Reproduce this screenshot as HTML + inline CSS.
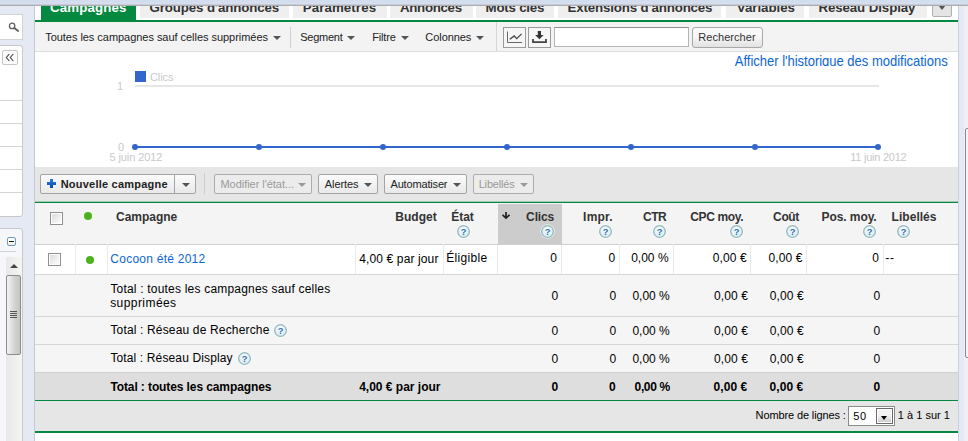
<!DOCTYPE html>
<html><head><meta charset="utf-8"><title>Campagnes</title>
<style>
html,body{margin:0;padding:0}
body{width:968px;height:441px;overflow:hidden;position:relative;background:#e4e9f4;font-family:"Liberation Sans",sans-serif;font-size:12px;color:#222}
.a{position:absolute}
.t{position:absolute;white-space:nowrap;line-height:14px}
.tab{position:absolute;top:5px;height:13px;background:#efefef;overflow:hidden}
.tab span{position:absolute;left:0;right:0;text-align:center;top:-6px;font-weight:bold;font-size:13.3px;line-height:16px;white-space:nowrap;color:#333}
.tb{font-size:11px;color:#222}
.arr{position:absolute;width:0;height:0;border-left:4px solid transparent;border-right:4px solid transparent;border-top:4px solid #555}
.btn{position:absolute;box-sizing:border-box;border:1px solid #a4a4a4;border-radius:2px;background:linear-gradient(#fbfbfb,#e9e9e9)}
.hd{font-weight:bold;font-size:12px;color:#333}
.q{position:absolute;width:13px;height:13px;border-radius:50%;box-sizing:border-box;border:1.5px solid #a3c4d2;background:#e6f1f6;color:#3f7fb8;font-size:10px;font-weight:bold;line-height:10px;text-align:center;box-shadow:0 0 1px #b9d0da}
.vl{position:absolute;width:1px;background:#eaeaea}
.hl{position:absolute;height:1px;background:#d6d6d6;left:35px;width:923px}
.r{position:absolute;white-space:nowrap;line-height:14px;text-align:right;width:100px}
.cb{position:absolute;width:13px;height:13px;box-sizing:border-box;border:1px solid #8e8f8f;background:#fff}
.cb i{position:absolute;left:1px;top:1px;right:1px;bottom:1px;background:linear-gradient(135deg,#dcdcdc,#fdfdfd)}
.dot{position:absolute;width:8px;height:8px;border-radius:50%;background:#4bb31e}
</style></head><body>
<div class="a" style="left:35px;top:0;width:923px;height:441px;background:#fff"></div>
<div class="a" style="left:34px;top:0;width:1px;height:441px;background:#c6c8cf"></div>
<div class="tab" style="left:41px;width:95px;background:#05883f;height:16px;"></div>
<div class="t" style="left:50.1px;top:1px;font-size:13.3px;font-weight:bold;color:#fff;letter-spacing:0.113px;">Campagnes</div>
<div class="tab" style="left:140px;width:149px;"></div>
<div class="t" style="left:149.5px;top:1px;font-size:13.3px;font-weight:bold;color:#333;letter-spacing:-0.118px;">Groupes d'annonces</div>
<div class="tab" style="left:293px;width:94px;"></div>
<div class="t" style="left:302.7px;top:1px;font-size:13.3px;font-weight:bold;color:#333;letter-spacing:0.1px;">Paramètres</div>
<div class="tab" style="left:390px;width:82.5px;"></div>
<div class="t" style="left:400.0px;top:1px;font-size:13.3px;font-weight:bold;color:#333;letter-spacing:-0.314px;">Annonces</div>
<div class="tab" style="left:475.6px;width:78.10000000000002px;"></div>
<div class="t" style="left:485.6px;top:1px;font-size:13.3px;font-weight:bold;color:#333;letter-spacing:-0.225px;">Mots clés</div>
<div class="tab" style="left:557.8px;width:163.70000000000005px;"></div>
<div class="t" style="left:567.6px;top:1px;font-size:13.3px;font-weight:bold;color:#333;letter-spacing:-0.155px;">Extensions d'annonces</div>
<div class="tab" style="left:726px;width:78px;"></div>
<div class="t" style="left:736.8px;top:1px;font-size:13.3px;font-weight:bold;color:#333;letter-spacing:-0.025px;">Variables</div>
<div class="tab" style="left:809px;width:117.5px;"></div>
<div class="t" style="left:818.4px;top:1px;font-size:13.3px;font-weight:bold;color:#333;letter-spacing:-0.092px;">Réseau Display</div>
<div class="btn" style="left:932px;top:-3px;width:20px;height:20px;background:#e4e4e4;border-color:#b0b0b0"></div>
<div class="a" style="left:938px;top:5px;width:0;height:0;border-left:4.5px solid transparent;border-right:4.5px solid transparent;border-top:5px solid #555"></div>
<div class="a" style="left:35px;top:20px;width:923px;height:2px;background:#05883f"></div>
<div class="a" style="left:35px;top:22px;width:923px;height:29px;background:#f3f3f3;border-bottom:1px solid #dcdcdc"></div>
<div class="t" style="left:45.2px;top:30px;font-size:11px;color:#222;letter-spacing:-0.038px;">Toutes les campagnes sauf celles supprimées</div>
<div class="arr" style="left:273px;top:36px"></div>
<div class="a" style="left:290px;top:27px;width:1px;height:21px;background:#d0d0d0"></div>
<div class="t" style="left:300.3px;top:30px;font-size:11px;color:#222;letter-spacing:-0.267px;">Segment</div>
<div class="arr" style="left:347px;top:36px"></div>
<div class="t" style="left:372.2px;top:30px;font-size:11px;color:#222;letter-spacing:-0.14px;">Filtre</div>
<div class="arr" style="left:400.5px;top:36px"></div>
<div class="t" style="left:425.3px;top:30px;font-size:11px;color:#222;letter-spacing:-0.057px;">Colonnes</div>
<div class="arr" style="left:476px;top:36px"></div>
<div class="a" style="left:496px;top:22px;width:1px;height:29px;background:#d6d6d6"></div>
<div class="a" style="left:503px;top:27px;width:23px;height:21px;box-sizing:border-box;border:1px solid #9a9a9a;background:#f6f6f6"><svg width="21" height="19" viewBox="0 0 21 19" style="position:absolute;left:0;top:0"><path d="M3.5 3.500V14.500H18" fill="none" stroke="#666" stroke-width="1"/><path d="M5.800 11.200L10.200 7.900L12.700 10.600L17.600 5.900" fill="none" stroke="#444" stroke-width="1.300"/></svg></div>
<div class="a" style="left:528px;top:27px;width:23px;height:21px;box-sizing:border-box;border:1px solid #9a9a9a;background:#f6f6f6"><svg width="21" height="19" viewBox="0 0 21 19" style="position:absolute;left:0;top:0"><path d="M8.8 3 H12 V7 H14.6 L10.4 11.2 L6.2 7 H8.8 Z" fill="#333"/><path d="M4 11 V14.2 H17 V11" fill="none" stroke="#444" stroke-width="1.8"/></svg></div>
<div class="a" style="left:554px;top:27px;width:135px;height:20px;box-sizing:border-box;border:1px solid #b5b5b5;border-top-color:#8f8f8f;background:#fff"></div>
<div class="btn" style="left:692px;top:27px;width:71px;height:21px;border-radius:3px;border-color:#a8a8a8;background:linear-gradient(#f8f8f8 40%,#e2e2e2)"></div>
<div class="t" style="left:698.3px;top:30px;font-size:11px;color:#333;letter-spacing:0.044px;">Rechercher</div>
<div class="a" style="left:700px;top:52px;width:258px;height:14px;overflow:hidden"><div class="t" style="left:34.8px;top:1px;font-size:13px;line-height:15px;color:#0c66d6;transform:scaleY(1.09);transform-origin:0 0;letter-spacing:-0.01px">Afficher l'historique des modifications</div></div>
<div class="a" style="left:135px;top:71px;width:11px;height:11px;background:#3366cc"></div>
<div class="t" style="left:150.0px;top:70px;font-size:11px;color:#c9c9c9;letter-spacing:-0.1px;">Clics</div>
<div class="a" style="left:135px;top:85px;width:744px;height:2px;background:#e6e6e6"></div>
<div class="t" style="left:117.1px;top:79px;font-size:11px;color:#c9c9c9;">1</div>
<div class="t" style="left:118.1px;top:140px;font-size:11px;color:#c9c9c9;">0</div>
<div class="t" style="left:109.4px;top:150px;font-size:11px;color:#c9c9c9;letter-spacing:-0.08px;">5 juin 2012</div>
<div class="t" style="left:850.2px;top:150px;font-size:11px;color:#c9c9c9;letter-spacing:-0.236px;">11 juin 2012</div>
<div class="a" style="left:135px;top:146px;width:743px;height:2px;background:#3366cc"></div>
<div class="a" style="left:132.0px;top:144px;width:6px;height:6px;border-radius:50%;background:#3366cc"></div>
<div class="a" style="left:255.9px;top:144px;width:6px;height:6px;border-radius:50%;background:#3366cc"></div>
<div class="a" style="left:379.8px;top:144px;width:6px;height:6px;border-radius:50%;background:#3366cc"></div>
<div class="a" style="left:503.7px;top:144px;width:6px;height:6px;border-radius:50%;background:#3366cc"></div>
<div class="a" style="left:627.6px;top:144px;width:6px;height:6px;border-radius:50%;background:#3366cc"></div>
<div class="a" style="left:751.5px;top:144px;width:6px;height:6px;border-radius:50%;background:#3366cc"></div>
<div class="a" style="left:875.4px;top:144px;width:6px;height:6px;border-radius:50%;background:#3366cc"></div>
<div class="a" style="left:35px;top:167px;width:923px;height:35px;background:#e6e6e6"></div>
<div class="a" style="left:35px;top:201px;width:923px;height:1px;background:rgba(5,136,63,.3)"></div><div class="a" style="left:35px;top:202px;width:923px;height:1px;background:#05883f"></div><div class="a" style="left:35px;top:203px;width:923px;height:1px;background:rgba(5,136,63,.15)"></div>
<div class="btn" style="left:40px;top:174px;width:135px;height:20px;border-radius:2px 0 0 2px"></div>
<div class="btn" style="left:174px;top:174px;width:22px;height:20px;border-radius:0 2px 2px 0"></div>
<svg class="a" style="left:47px;top:179px" width="9" height="9" viewBox="0 0 9 9"><defs><linearGradient id="pg" x1="0" y1="0" x2="0" y2="1"><stop offset="0" stop-color="#2a7ae0"/><stop offset="1" stop-color="#0a49b0"/></linearGradient></defs><path d="M3 0h3v3h3v3H6v3H3V6H0V3h3z" fill="url(#pg)"/></svg>
<div class="t" style="left:60.7px;top:177px;font-size:11px;font-weight:bold;color:#222;letter-spacing:0.225px;">Nouvelle campagne</div>
<div class="arr" style="left:182px;top:182.500px"></div>
<div class="a" style="left:204px;top:173px;width:1px;height:21px;background:#cfcfcf"></div>
<div class="btn" style="left:214px;top:174px;width:97.5px;height:20px;background:#ececec;border-color:#adadad"></div>
<div class="t" style="left:220.5px;top:177px;font-size:11px;color:#9a9a9a;letter-spacing:-0.041px;">Modifier l'état...</div>
<div class="arr" style="left:298px;top:182.500px;border-top-color:#999"></div>
<div class="btn" style="left:317.5px;top:174px;width:60.0px;height:20px;"></div>
<div class="t" style="left:324.8px;top:177px;font-size:11px;color:#222;letter-spacing:-0.083px;">Alertes</div>
<div class="arr" style="left:363.500px;top:182.500px"></div>
<div class="btn" style="left:383.5px;top:174px;width:83.0px;height:20px;"></div>
<div class="t" style="left:390.5px;top:177px;font-size:11px;color:#222;letter-spacing:-0.17px;">Automatiser</div>
<div class="arr" style="left:452.500px;top:182.500px"></div>
<div class="btn" style="left:472.5px;top:174px;width:61.0px;height:20px;background:#ececec;border-color:#adadad"></div>
<div class="t" style="left:478.7px;top:177px;font-size:11px;color:#9a9a9a;letter-spacing:-0.186px;">Libellés</div>
<div class="arr" style="left:519.500px;top:182.500px;border-top-color:#999"></div>
<svg width="0" height="0" style="position:absolute"><defs><radialGradient id="hg" cx=".5" cy=".35" r=".7"><stop offset="0" stop-color="#f8fdff"/><stop offset="1" stop-color="#d4eaf0"/></radialGradient></defs></svg>
<div class="a" style="left:35px;top:203px;width:923px;height:41px;background:#f4f4f4"></div>
<div class="a" style="left:498px;top:204px;width:64px;height:40px;background:#cccccc"></div>
<div class="hl" style="top:244px;background:#cfcfcf"></div>
<div class="a" style="left:75px;top:244px;width:1px;height:1px;background:#f0f0f0"></div>
<div class="a" style="left:107px;top:244px;width:1px;height:1px;background:#f0f0f0"></div>
<div class="a" style="left:355px;top:244px;width:1px;height:1px;background:#f0f0f0"></div>
<div class="a" style="left:443px;top:244px;width:1px;height:1px;background:#f0f0f0"></div>
<div class="a" style="left:619px;top:244px;width:1px;height:1px;background:#f0f0f0"></div>
<div class="a" style="left:673px;top:244px;width:1px;height:1px;background:#f0f0f0"></div>
<div class="a" style="left:750px;top:244px;width:1px;height:1px;background:#f0f0f0"></div>
<div class="a" style="left:806px;top:244px;width:1px;height:1px;background:#f0f0f0"></div>
<div class="a" style="left:883px;top:244px;width:1px;height:1px;background:#f0f0f0"></div>
<div class="cb" style="left:50px;top:212px"><i></i></div>
<div class="dot" style="left:84px;top:212px"></div>
<div class="t" style="left:116.0px;top:210px;font-size:12px;font-weight:bold;color:#333;letter-spacing:-0.014px;">Campagne</div>
<div class="t" style="left:395.2px;top:210px;font-size:12px;font-weight:bold;color:#333;letter-spacing:0.06px;">Budget</div>
<div class="t" style="left:451.2px;top:210px;font-size:12px;font-weight:bold;color:#333;">État</div>
<div class="t" style="left:526.1px;top:210px;font-size:12px;font-weight:bold;color:#333;letter-spacing:-0.125px;">Clics</div>
<div class="t" style="left:583.1px;top:210px;font-size:12px;font-weight:bold;color:#333;letter-spacing:0.2px;">Impr.</div>
<div class="t" style="left:643.1px;top:210px;font-size:12px;font-weight:bold;color:#333;letter-spacing:-0.5px;">CTR</div>
<div class="t" style="left:690.2px;top:210px;font-size:12px;font-weight:bold;color:#333;letter-spacing:-0.343px;">CPC moy.</div>
<div class="t" style="left:773.1px;top:210px;font-size:12px;font-weight:bold;color:#333;letter-spacing:-0.367px;">Coût</div>
<div class="t" style="left:821.5px;top:210px;font-size:12px;font-weight:bold;color:#333;letter-spacing:-0.075px;">Pos. moy.</div>
<div class="t" style="left:891.6px;top:210px;font-size:12px;font-weight:bold;color:#333;letter-spacing:0.029px;">Libellés</div>
<svg class="a" style="left:501px;top:211px" width="10" height="9" viewBox="0 0 10 9"><path d="M5 1V7M1.500 3.800L5 7.100L8.500 3.800" fill="none" stroke="#222" stroke-width="1.700"/></svg>
<svg class="a" style="left:455.9px;top:224.0px" width="15" height="15" viewBox="0 0 15 15"><circle cx="7.5" cy="7.5" r="7.2" fill="#fff" opacity=".75"/><circle cx="7.5" cy="7.5" r="5.850" fill="url(#hg)" stroke="#93b7be" stroke-width="1.300"/><text x="7.500" y="10.800" text-anchor="middle" font-family="Liberation Sans, sans-serif" font-size="9.400" font-weight="bold" fill="#3a6fad">?</text></svg>
<svg class="a" style="left:539.9px;top:224.0px" width="15" height="15" viewBox="0 0 15 15"><circle cx="7.5" cy="7.5" r="7.2" fill="#fff" opacity=".75"/><circle cx="7.5" cy="7.5" r="5.850" fill="url(#hg)" stroke="#93b7be" stroke-width="1.300"/><text x="7.500" y="10.800" text-anchor="middle" font-family="Liberation Sans, sans-serif" font-size="9.400" font-weight="bold" fill="#3a6fad">?</text></svg>
<svg class="a" style="left:597.9px;top:224.0px" width="15" height="15" viewBox="0 0 15 15"><circle cx="7.5" cy="7.5" r="7.2" fill="#fff" opacity=".75"/><circle cx="7.5" cy="7.5" r="5.850" fill="url(#hg)" stroke="#93b7be" stroke-width="1.300"/><text x="7.500" y="10.800" text-anchor="middle" font-family="Liberation Sans, sans-serif" font-size="9.400" font-weight="bold" fill="#3a6fad">?</text></svg>
<svg class="a" style="left:652.0px;top:224.0px" width="15" height="15" viewBox="0 0 15 15"><circle cx="7.5" cy="7.5" r="7.2" fill="#fff" opacity=".75"/><circle cx="7.5" cy="7.5" r="5.850" fill="url(#hg)" stroke="#93b7be" stroke-width="1.300"/><text x="7.500" y="10.800" text-anchor="middle" font-family="Liberation Sans, sans-serif" font-size="9.400" font-weight="bold" fill="#3a6fad">?</text></svg>
<svg class="a" style="left:728.9px;top:224.0px" width="15" height="15" viewBox="0 0 15 15"><circle cx="7.5" cy="7.5" r="7.2" fill="#fff" opacity=".75"/><circle cx="7.5" cy="7.5" r="5.850" fill="url(#hg)" stroke="#93b7be" stroke-width="1.300"/><text x="7.500" y="10.800" text-anchor="middle" font-family="Liberation Sans, sans-serif" font-size="9.400" font-weight="bold" fill="#3a6fad">?</text></svg>
<svg class="a" style="left:784.9px;top:224.0px" width="15" height="15" viewBox="0 0 15 15"><circle cx="7.5" cy="7.5" r="7.2" fill="#fff" opacity=".75"/><circle cx="7.5" cy="7.5" r="5.850" fill="url(#hg)" stroke="#93b7be" stroke-width="1.300"/><text x="7.500" y="10.800" text-anchor="middle" font-family="Liberation Sans, sans-serif" font-size="9.400" font-weight="bold" fill="#3a6fad">?</text></svg>
<svg class="a" style="left:861.9px;top:224.0px" width="15" height="15" viewBox="0 0 15 15"><circle cx="7.5" cy="7.5" r="7.2" fill="#fff" opacity=".75"/><circle cx="7.5" cy="7.5" r="5.850" fill="url(#hg)" stroke="#93b7be" stroke-width="1.300"/><text x="7.500" y="10.800" text-anchor="middle" font-family="Liberation Sans, sans-serif" font-size="9.400" font-weight="bold" fill="#3a6fad">?</text></svg>
<svg class="a" style="left:895.9px;top:224.0px" width="15" height="15" viewBox="0 0 15 15"><circle cx="7.5" cy="7.5" r="7.2" fill="#fff" opacity=".75"/><circle cx="7.5" cy="7.5" r="5.850" fill="url(#hg)" stroke="#93b7be" stroke-width="1.300"/><text x="7.500" y="10.800" text-anchor="middle" font-family="Liberation Sans, sans-serif" font-size="9.400" font-weight="bold" fill="#3a6fad">?</text></svg>
<div class="a" style="left:35px;top:275px;width:923px;height:97px;background:#f5f5f5"></div>
<div class="a" style="left:35px;top:372px;width:923px;height:28px;background:#dedede"></div>
<div class="hl" style="top:274px"></div>
<div class="hl" style="top:316px"></div>
<div class="hl" style="top:344px"></div>
<div class="hl" style="top:372px;background:#d0d0d0"></div>
<div class="vl" style="left:75px;top:245px;height:29px"></div>
<div class="vl" style="left:107px;top:245px;height:29px"></div>
<div class="vl" style="left:355px;top:245px;height:29px"></div>
<div class="vl" style="left:443px;top:245px;height:29px"></div>
<div class="vl" style="left:497px;top:245px;height:29px"></div>
<div class="vl" style="left:561px;top:245px;height:29px"></div>
<div class="vl" style="left:619px;top:245px;height:29px"></div>
<div class="vl" style="left:673px;top:245px;height:29px"></div>
<div class="vl" style="left:750px;top:245px;height:29px"></div>
<div class="vl" style="left:806px;top:245px;height:29px"></div>
<div class="vl" style="left:883px;top:245px;height:29px"></div>
<div class="cb" style="left:48px;top:253px"><i></i></div>
<div class="dot" style="left:86px;top:256px"></div>
<div class="t" style="left:110.3px;top:252px;font-size:12px;color:#0c66d6;letter-spacing:0.25px;">Cocoon été 2012</div>
<div class="t" style="left:359.3px;top:252px;font-size:12px;color:#000;letter-spacing:0.121px;">4,00 € par jour</div>
<div class="t" style="left:446.3px;top:251px;font-size:12px;color:#000;letter-spacing:0.314px;">Éligible</div>
<div class="t" style="left:550.3px;top:251px;font-size:12px;color:#000;">0</div>
<div class="t" style="left:608.4px;top:251px;font-size:12px;color:#000;">0</div>
<div class="t" style="left:631.2px;top:251px;font-size:12px;color:#000;">0,00 %</div>
<div class="t" style="left:712.8px;top:251px;font-size:12px;color:#000;letter-spacing:0.12px;">0,00 €</div>
<div class="t" style="left:768.5px;top:251px;font-size:12px;color:#000;letter-spacing:0.12px;">0,00 €</div>
<div class="t" style="left:872.25px;top:251px;font-size:12px;color:#000;">0</div>
<div class="t" style="left:885.3px;top:251px;font-size:12px;color:#000;letter-spacing:0.6px;">--</div>
<div class="t" style="left:551.5px;top:289px;font-size:12px;color:#000;">0</div>
<div class="t" style="left:609.6px;top:289px;font-size:12px;color:#000;">0</div>
<div class="t" style="left:632.4px;top:289px;font-size:12px;color:#000;">0,00 %</div>
<div class="t" style="left:714.0px;top:289px;font-size:12px;color:#000;letter-spacing:0.12px;">0,00 €</div>
<div class="t" style="left:769.7px;top:289px;font-size:12px;color:#000;letter-spacing:0.12px;">0,00 €</div>
<div class="t" style="left:873.45px;top:289px;font-size:12px;color:#000;">0</div>
<div class="t" style="left:551.5px;top:324px;font-size:12px;color:#000;">0</div>
<div class="t" style="left:609.6px;top:324px;font-size:12px;color:#000;">0</div>
<div class="t" style="left:632.4px;top:324px;font-size:12px;color:#000;">0,00 %</div>
<div class="t" style="left:714.0px;top:324px;font-size:12px;color:#000;letter-spacing:0.12px;">0,00 €</div>
<div class="t" style="left:769.7px;top:324px;font-size:12px;color:#000;letter-spacing:0.12px;">0,00 €</div>
<div class="t" style="left:873.45px;top:324px;font-size:12px;color:#000;">0</div>
<div class="t" style="left:551.5px;top:352px;font-size:12px;color:#000;">0</div>
<div class="t" style="left:609.6px;top:352px;font-size:12px;color:#000;">0</div>
<div class="t" style="left:632.4px;top:352px;font-size:12px;color:#000;">0,00 %</div>
<div class="t" style="left:714.0px;top:352px;font-size:12px;color:#000;letter-spacing:0.12px;">0,00 €</div>
<div class="t" style="left:769.7px;top:352px;font-size:12px;color:#000;letter-spacing:0.12px;">0,00 €</div>
<div class="t" style="left:873.45px;top:352px;font-size:12px;color:#000;">0</div>
<div class="t" style="left:551.4px;top:380px;font-size:12px;font-weight:bold;color:#000;">0</div>
<div class="t" style="left:609.05px;top:380px;font-size:12px;font-weight:bold;color:#000;">0</div>
<div class="t" style="left:634.6px;top:380px;font-size:12px;font-weight:bold;color:#000;letter-spacing:-0.38px;">0,00 %</div>
<div class="t" style="left:713.5px;top:380px;font-size:12px;font-weight:bold;color:#000;letter-spacing:0.08px;">0,00 €</div>
<div class="t" style="left:769.6px;top:380px;font-size:12px;font-weight:bold;color:#000;letter-spacing:0.06px;">0,00 €</div>
<div class="t" style="left:873.5px;top:380px;font-size:12px;font-weight:bold;color:#000;">0</div>
<div class="t" style="left:110.4px;top:282px;font-size:12px;color:#000;letter-spacing:0.197px;">Total : toutes les campagnes sauf celles</div>
<div class="t" style="left:110.2px;top:296px;font-size:12px;color:#000;letter-spacing:0.433px;">supprimées</div>
<div class="t" style="left:110.4px;top:323px;font-size:12px;color:#000;letter-spacing:0.162px;">Total : Réseau de Recherche</div>
<svg class="a" style="left:272.8px;top:323.0px" width="15" height="15" viewBox="0 0 15 15"><circle cx="7.5" cy="7.5" r="7.2" fill="#fff" opacity=".75"/><circle cx="7.5" cy="7.5" r="5.850" fill="url(#hg)" stroke="#93b7be" stroke-width="1.300"/><text x="7.500" y="10.800" text-anchor="middle" font-family="Liberation Sans, sans-serif" font-size="9.400" font-weight="bold" fill="#3a6fad">?</text></svg>
<div class="t" style="left:110.4px;top:351px;font-size:12px;color:#000;letter-spacing:0.133px;">Total : Réseau Display</div>
<svg class="a" style="left:236.8px;top:351.0px" width="15" height="15" viewBox="0 0 15 15"><circle cx="7.5" cy="7.5" r="7.2" fill="#fff" opacity=".75"/><circle cx="7.5" cy="7.5" r="5.850" fill="url(#hg)" stroke="#93b7be" stroke-width="1.300"/><text x="7.500" y="10.800" text-anchor="middle" font-family="Liberation Sans, sans-serif" font-size="9.400" font-weight="bold" fill="#3a6fad">?</text></svg>
<div class="t" style="left:110.4px;top:380px;font-size:12px;font-weight:bold;color:#000;letter-spacing:-0.104px;">Total : toutes les campagnes</div>
<div class="t" style="left:359.2px;top:380px;font-size:12px;font-weight:bold;color:#000;letter-spacing:-0.007px;">4,00 € par jour</div>
<div class="a" style="left:35px;top:400px;width:923px;height:1px;background:#05883f"></div>
<div class="a" style="left:35px;top:401px;width:923px;height:29.500px;background:#e6e6e6"></div>
<div class="a" style="left:35px;top:430.500px;width:923px;height:2.500px;background:#05883f"></div>
<div class="t" style="left:755.6px;top:408px;font-size:11px;color:#000;letter-spacing:-0.124px;">Nombre de lignes :</div>
<div class="a" style="left:848px;top:406px;width:47px;height:20px;box-sizing:border-box;border:1px solid #8a8a8a;background:#fff"></div>
<div class="t" style="left:853.3px;top:409px;font-size:11px;color:#000;letter-spacing:0.5px;">50</div>
<div class="a" style="left:876px;top:408px;width:17px;height:16px;box-sizing:border-box;border:1px solid #6a6a6a;background:#fff"></div><div class="a" style="left:878px;top:410px;width:13px;height:12px;background:linear-gradient(#f2f2f2 45%,#cdcdcd)"></div>
<div class="a" style="left:881px;top:416px;width:0;height:0;border-left:3.700px solid transparent;border-right:3.700px solid transparent;border-top:4px solid #000"></div>
<div class="t" style="left:897.8px;top:408px;font-size:11px;color:#000;letter-spacing:0.02px;">1 à 1 sur 1</div>
<div class="a" style="left:958px;top:0;width:1px;height:441px;background:#c9d0dd"></div>
<div class="a" style="left:964px;top:0;width:4px;height:441px;background:#f0f0f0"></div>
<div class="a" style="left:965px;top:128px;width:5px;height:230px;box-sizing:border-box;border:1px solid #8a8a8a;border-radius:2px;background:#f4f4f4"></div>
<div class="a" style="left:-1px;top:14px;width:24px;height:26px;box-sizing:border-box;border:1px solid #d2d2d2;background:#fff"></div>
<svg class="a" style="left:6px;top:20px" width="14" height="13" viewBox="0 0 14 13"><circle cx="6.100" cy="5.900" r="2.700" fill="none" stroke="#606060" stroke-width="1.300"/><path d="M8.300 8.100L12.100 11" stroke="#606060" stroke-width="1.900" stroke-linecap="round"/></svg>
<div class="a" style="left:-3px;top:45px;width:26px;height:172px;box-sizing:border-box;border:1px solid #c8c8c8;border-radius:3px;background:#fff"></div>
<div class="a" style="left:0;top:100px;width:22px;height:1px;background:#d4d4d4"></div>
<div class="a" style="left:0;top:123px;width:22px;height:1px;background:#d4d4d4"></div>
<div class="a" style="left:0;top:146px;width:22px;height:1px;background:#d4d4d4"></div>
<div class="a" style="left:0;top:169px;width:22px;height:1px;background:#d4d4d4"></div>
<div class="a" style="left:0;top:192px;width:22px;height:1px;background:#d4d4d4"></div>
<div class="a" style="left:2px;top:50px;width:16px;height:15px;box-sizing:border-box;border:1px solid #c6c6c6;border-radius:2px;background:#fbfbfb"></div>
<svg class="a" style="left:5px;top:53px" width="10" height="9" viewBox="0 0 10 9"><path d="M4.300 1L1.300 4.500L4.300 8M8.300 1L5.300 4.500L8.300 8" fill="none" stroke="#444" stroke-width="1.100"/></svg>
<div class="a" style="left:-3px;top:228px;width:26px;height:230px;box-sizing:border-box;border:1px solid #c8c8c8;border-radius:3px;background:#f6f7fb"></div>
<div class="a" style="left:7px;top:237px;width:9px;height:9px;box-sizing:border-box;border:1px solid #6f9ac8;border-radius:2px;background:linear-gradient(#fff 55%,#efe6d6)"></div>
<div class="a" style="left:9px;top:241px;width:5px;height:1px;background:#111"></div>
<div class="a" style="left:0;top:251px;width:16px;height:1px;background:#d2d2d2"></div>
<div class="a" style="left:0;top:257px;width:6px;height:184px;background:#f6f7fb"></div>
<div class="a" style="left:6px;top:257px;width:16px;height:184px;background:linear-gradient(90deg,#e8e8e8,#f5f5f5)"></div>
<div class="a" style="left:10px;top:264px;width:0;height:0;border-left:4px solid transparent;border-right:4px solid transparent;border-bottom:4px solid #444"></div>
<div class="a" style="left:6px;top:275px;width:15px;height:79.500px;box-sizing:border-box;border:1px solid #8c8c8c;border-radius:2px;background:linear-gradient(90deg,#f4f4f4,#d2d2d2 60%,#c4c4c4)"></div>
<div class="a" style="left:10px;top:311px;width:7px;height:1px;background:#555"></div>
<div class="a" style="left:10px;top:313px;width:7px;height:1px;background:#555"></div>
<div class="a" style="left:10px;top:315px;width:7px;height:1px;background:#555"></div>
<div class="a" style="left:10px;top:317px;width:7px;height:1px;background:#555"></div>
<div class="a" style="left:0;top:0;width:968px;height:5px;background:linear-gradient(#d1dced,#d7e0ef)"></div>
<div class="a" style="left:0;top:4px;width:968px;height:1px;background:#c6cdd9"></div>
<div class="a" style="left:0;top:5px;width:968px;height:1px;background:#adadaf"></div>
</body></html>
